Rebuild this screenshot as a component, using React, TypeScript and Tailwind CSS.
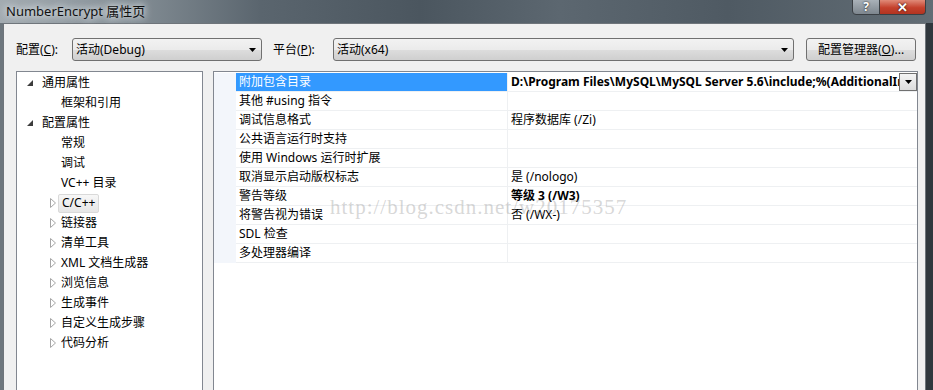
import React from "react";

const FONT = "font-['Noto_Sans','Noto_Sans_CJK_SC',sans-serif]";

// tree items: level 0 = top group, level 1 = child
const TREE: { label: React.ReactNode; level: 0 | 1; arrow?: "open" | "closed"; active?: boolean }[] = [
  { label: "通用属性", level: 0, arrow: "open" },
  { label: "框架和引用", level: 1 },
  { label: "配置属性", level: 0, arrow: "open" },
  { label: "常规", level: 1 },
  { label: "调试", level: 1 },
  { label: "VC++ 目录", level: 1 },
  { label: "C/C++", level: 1, arrow: "closed", active: true },
  { label: "链接器", level: 1, arrow: "closed" },
  { label: "清单工具", level: 1, arrow: "closed" },
  { label: "XML 文档生成器", level: 1, arrow: "closed" },
  { label: "浏览信息", level: 1, arrow: "closed" },
  { label: "生成事件", level: 1, arrow: "closed" },
  { label: "自定义生成步骤", level: 1, arrow: "closed" },
  { label: "代码分析", level: 1, arrow: "closed" },
];

const PROPS: { name: string; value?: string; bold?: boolean }[] = [
  { name: "附加包含目录", value: "D:\\Program Files\\MySQL\\MySQL Server 5.6\\include;%(AdditionalIncludeDirectories)", bold: true },
  { name: "其他 #using 指令" },
  { name: "调试信息格式", value: "程序数据库 (/Zi)" },
  { name: "公共语言运行时支持" },
  { name: "使用 Windows 运行时扩展" },
  { name: "取消显示启动版权标志", value: "是 (/nologo)" },
  { name: "警告等级", value: "等级 3 (/W3)", bold: true },
  { name: "将警告视为错误", value: "否 (/WX-)" },
  { name: "SDL 检查" },
  { name: "多处理器编译" },
];

function DownArrow() {
  return (
    <svg width="7" height="4" viewBox="0 0 7 4">
      <polygon points="0,0 7,0 3.5,4" fill="#000" />
    </svg>
  );
}

function Combo({ text, width }: { text: string; width: string }) {
  return (
    <div
      className={`${width} h-[23px] flex items-center justify-between pl-[3px] pr-[5px] rounded-[3px] border border-[#707070] bg-[linear-gradient(#f2f2f2_0%,#ebebeb_50%,#dddddd_51%,#cfcfcf_100%)] text-[12px] text-black`}
    >
      <span>{text}</span>
      <DownArrow />
    </div>
  );
}

function TreeArrow({ kind }: { kind: "open" | "closed" }) {
  if (kind === "open") {
    return (
      <svg width="6" height="6" viewBox="0 0 6 6">
        <polygon points="6,0 6,6 0,6" fill="#3c3c3c" />
      </svg>
    );
  }
  return (
    <svg width="6" height="10" viewBox="0 0 6 10">
      <polygon points="0.5,0.5 5.5,5 0.5,9.5" fill="none" stroke="#a6a6a6" strokeWidth="1" />
    </svg>
  );
}

export default function App() {
  return (
    <div className={`${FONT} relative w-[933px] h-[390px] overflow-hidden bg-[#3b444c] select-none`}>
      {/* Aero title bar */}
      <div className="relative h-[23px] flex items-center bg-[linear-gradient(90deg,#a3abb1_0%,#8a949b_12%,#5a656e_28%,#4b565f_45%,#5c6770_60%,#4f5a63_78%,#626d75_100%)]">
        <span className="pl-[6px] text-[13px] text-[#111] [text-shadow:0_0_6px_#e8eef2,0_0_10px_#e8eef2]">NumberEncrypt 属性页</span>
        <div className="absolute right-[7px] top-[-1px] flex">
          <div className="w-[28px] h-[16px] flex items-center justify-center rounded-bl-[4px] border border-[#3a3f44] bg-[linear-gradient(#a9b1b8,#7d868e)] text-white text-[12px] font-bold leading-none [text-shadow:0_0_2px_#000]">
            ?
          </div>
          <div className="w-[46px] h-[16px] flex items-center justify-center rounded-br-[4px] border border-l-0 border-[#3a3f44] bg-[linear-gradient(#e08a78,#c4402c_55%,#b23421)] text-white text-[13px] font-bold leading-none [text-shadow:0_0_2px_#000]">
            ✕
          </div>
        </div>
      </div>

      {/* Window body */}
      <div className="flex h-[367px]">
        <div className="w-[3px] bg-[#6d767d]" />
        <div className="flex-1 flex flex-col border-l border-t border-r border-[#6e747a] bg-[#f0f0f0] pl-[12px] pt-[14px]">
          {/* configuration row */}
          <div className="flex items-center h-[23px] text-[12px] text-black">
            <span className="w-[56px]">
              配置(<span className="underline">C</span>):
            </span>
            <Combo text="活动(Debug)" width="w-[190px]" />
            <span className="ml-[11px] w-[60px]">
              平台(<span className="underline">P</span>):
            </span>
            <Combo text="活动(x64)" width="w-[461px]" />
            <div className="ml-[12px] w-[110px] h-[23px] flex items-center justify-center rounded-[3px] border border-[#707070] bg-[linear-gradient(#f2f2f2_0%,#ebebeb_50%,#dddddd_51%,#cfcfcf_100%)]">
              配置管理器(<span className="underline">O</span>)...
            </div>
          </div>

          <div className="flex gap-[10px] mt-[10px] flex-1">
            {/* left tree */}
            <div className="w-[187px] h-[330px] border border-[#828790] bg-white pt-[1px] text-[12px] text-black">
              {TREE.map((item, i) => (
                <div key={i} className="h-[20px] flex items-center">
                  <div className={`${item.level === 0 ? "w-[21px]" : "w-[44px]"} flex justify-end pr-[5px]`}>
                    {item.arrow && <TreeArrow kind={item.arrow} />}
                  </div>
                  {item.active ? (
                    <span className="ml-[-3px] h-[19px] px-[3px] flex items-center rounded-[2px] border border-[#d9d9d9] bg-[linear-gradient(#f7f7f7,#e6e6e6)]">
                      {item.label}
                    </span>
                  ) : (
                    <span className={item.level === 0 ? "ml-[4px]" : ""}>{item.label}</span>
                  )}
                </div>
              ))}
            </div>

            {/* right property grid */}
            <div className="w-[705px] h-[330px] border border-[#828790] bg-white pt-[1px] text-[12px] text-black">
              {PROPS.map((p, i) => (
                <div key={p.name} className="flex h-[19px]">
                  <div className="w-[22px] bg-[#f3f6fb]" />
                  <div
                    className={`w-[272px] flex items-center pl-[3px] border-b border-r border-[#eef0f2] ${
                      i === 0 ? "bg-[#3399ff] text-white" : ""
                    }`}
                  >
                    {p.name}
                  </div>
                  <div className="flex-1 min-w-0 flex items-center border-b border-[#eef0f2] pl-[3px]">
                    <span className={`flex-1 min-w-0 overflow-hidden whitespace-nowrap ${p.bold ? "font-bold" : ""}`}>
                      {p.value}
                    </span>
                    {i === 0 && (
                      <div className="w-[18px] h-[18px] flex items-center justify-center border border-[#707070] bg-[linear-gradient(#f4f4f4,#dcdcdc)]">
                        <DownArrow />
                      </div>
                    )}
                  </div>
                </div>
              ))}
            </div>
          </div>
        </div>
        <div className="w-[7px] bg-[#30373d]" />
      </div>

      {/* blog watermark */}
      <div className="absolute left-[330px] top-[192px] font-['Liberation_Serif',serif] text-[21px] tracking-[1px] text-[#9a9a9a]/40 pointer-events-none">
        http://blog.csdn.net/w20175357
      </div>
    </div>
  );
}
